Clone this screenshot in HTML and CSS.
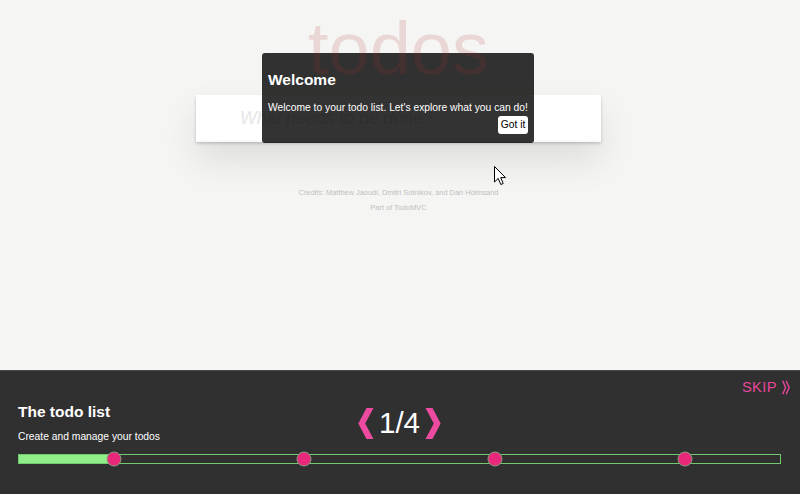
FILE: index.html
```html
<!DOCTYPE html>
<html>
<head>
<meta charset="utf-8">
<title>todos</title>
<link rel="stylesheet" href="styles.css">
</head>
<body>
<main class="page">
  <h1 class="title">todos</h1>
  <section class="app">
    <input class="new-todo" placeholder="What needs to be done?">
  </section>
  <footer class="info">
    <p>Credits: Matthew Jaoudi, Dmitri Sotnikov, and Dan Holmsand</p>
    <p>Part of TodoMVC</p>
  </footer>
  <div class="tip">
    <h3 class="tip-title">Welcome</h3>
    <p class="tip-text">Welcome to your todo list. Let's explore what you can do!</p>
    <button class="tip-btn">Got it</button>
  </div>
  <svg class="cursor" width="13" height="20" viewBox="0 0 13 20"><path d="M0.5 0.5 L0.5 16 L4.2 12.4 L6.8 18.5 L9.2 17.5 L6.7 11.6 L11.5 11.6 Z" fill="#fff" stroke="#000" stroke-width="1" stroke-linejoin="round"/></svg>
</main>
<section class="tour">
  <div class="skip-row">
    <span class="skip">SKIP</span>
    <svg class="skip-icon" width="8" height="15" viewBox="0 0 8 15"><path d="M0.7 0.7 L3.6 7.5 L0.7 14.3 M4.2 0.7 L7.1 7.5 L4.2 14.3" fill="none" stroke="#e8479b" stroke-width="1.4"/></svg>
  </div>
  <div class="mid">
    <div class="step">
      <h2 class="step-title">The todo list</h2>
      <p class="step-text">Create and manage your todos</p>
    </div>
    <div class="pager">
      <svg class="chev" width="16" height="31" viewBox="0 0 16 31"><polygon points="8.5,0 15.5,0 7.2,15.5 15.5,31 8.5,31 0.3,15.5" fill="#ec4b9f"/></svg>
      <span class="count">1/4</span>
      <svg class="chev" width="16" height="31" viewBox="0 0 16 31"><polygon points="7.5,0 0.5,0 8.8,15.5 0.5,31 7.5,31 15.7,15.5" fill="#ec4b9f"/></svg>
    </div>
    <div></div>
  </div>
  <div class="track">
    <div class="fill"></div>
    <span class="dot d1"></span>
    <span class="dot d2"></span>
    <span class="dot d3"></span>
    <span class="dot d4"></span>
  </div>
</section>
</body>
</html>
```
FILE: styles.css
```css
html, body {
  margin: 0;
  padding: 0;
}
body {
  width: 800px;
  height: 494px;
  overflow: hidden;
  background: #f5f5f3;
  font-family: "Liberation Sans", Arial, sans-serif;
}
.page {
  position: relative;
  height: 370px;
  display: flex;
  flex-direction: column;
  align-items: center;
  padding-right: 3px;
}
.title {
  position: relative;
  z-index: 1;
  margin: 12px 0 9px;
  font-size: 74px;
  line-height: 74px;
  font-weight: 100;
  color: rgba(175, 47, 47, 0.15);
  pointer-events: none;
}
.app {
  width: 405px;
  height: 47px;
  background: #fff;
  box-shadow: 0 1.5px 3px 0 rgba(0, 0, 0, 0.2), 0 18px 37px 0 rgba(0, 0, 0, 0.1);
}
.new-todo {
  display: block;
  box-sizing: border-box;
  width: 100%;
  height: 47px;
  margin: 0;
  border: none;
  outline: none;
  background: transparent;
  padding: 0 12px 0 44px;
  font-family: "Liberation Sans", Arial, sans-serif;
  font-size: 17.7px;
  color: #4d4d4d;
  box-shadow: inset 0 -1.5px 1px rgba(0, 0, 0, 0.03);
}
.new-todo::placeholder {
  font-style: italic;
  color: #e6e6e6;
}
.info {
  margin-top: 43px;
  text-align: center;
  color: #bfbfbf;
  font-size: 7.4px;
  line-height: 15px;
}
.info p {
  margin: 0;
}
.tip {
  position: absolute;
  left: 262px;
  top: 53px;
  width: 272px;
  height: 90px;
  box-sizing: border-box;
  padding: 0 6px;
  border-radius: 3px;
  background: rgba(0, 0, 0, 0.8);
  color: #fff;
  display: flex;
  flex-direction: column;
}
.tip-title {
  margin: 17.5px 0 0;
  font-size: 15.5px;
  line-height: 18px;
  font-weight: bold;
}
.tip-text {
  margin: 12px 0 0;
  font-size: 10.3px;
  line-height: 14px;
}
.tip-btn {
  align-self: flex-end;
  margin-top: 1.5px;
  height: 18px;
  padding: 0 2.7px;
  border: none;
  border-radius: 3px;
  background: #fff;
  color: #000;
  font-family: "Liberation Sans", Arial, sans-serif;
  font-size: 10.3px;
  line-height: 18px;
}
.cursor {
  position: absolute;
  left: 494px;
  top: 166px;
}
.tour {
  height: 124px;
  box-sizing: border-box;
  border-top: 1px solid #474747;
  background: #303030;
  padding: 0 19px 0 18px;
  color: #fff;
}
.skip-row {
  margin: 7px -9px 0 0;
  height: 18px;
  display: flex;
  justify-content: flex-end;
  align-items: center;
  gap: 5px;
}
.skip {
  color: #e8479b;
  font-size: 14.7px;
  line-height: 18px;
  letter-spacing: 0.4px;
}
.skip-icon {
  display: block;
  margin-top: 1px;
}
.mid {
  display: grid;
  grid-template-columns: 1fr auto 1fr;
  align-items: start;
}
.step-title {
  margin: 6.6px 0 0;
  font-size: 15.5px;
  line-height: 18px;
  font-weight: bold;
}
.step-text {
  margin: 9.8px 0 0;
  font-size: 10.3px;
  line-height: 14px;
}
.pager {
  display: flex;
  align-items: center;
  gap: 5px;
  margin-top: 11px;
}
.chev {
  display: block;
}
.count {
  font-size: 29.5px;
  line-height: 32px;
}
.track {
  position: relative;
  margin-top: 9.6px;
  height: 10px;
  box-sizing: border-box;
  border: 1px solid #72c86e;
}
.fill {
  width: 12.5%;
  height: 100%;
  background: #90ee88;
}
.dot {
  position: absolute;
  top: 50%;
  width: 15px;
  height: 15px;
  box-sizing: border-box;
  border-radius: 50%;
  border: 1px solid #8c9e7c;
  background: #e9287b;
  transform: translate(-50%, -50%);
}
.d1 { left: 12.5%; }
.d2 { left: 37.5%; }
.d3 { left: 62.5%; }
.d4 { left: 87.5%; }
```
